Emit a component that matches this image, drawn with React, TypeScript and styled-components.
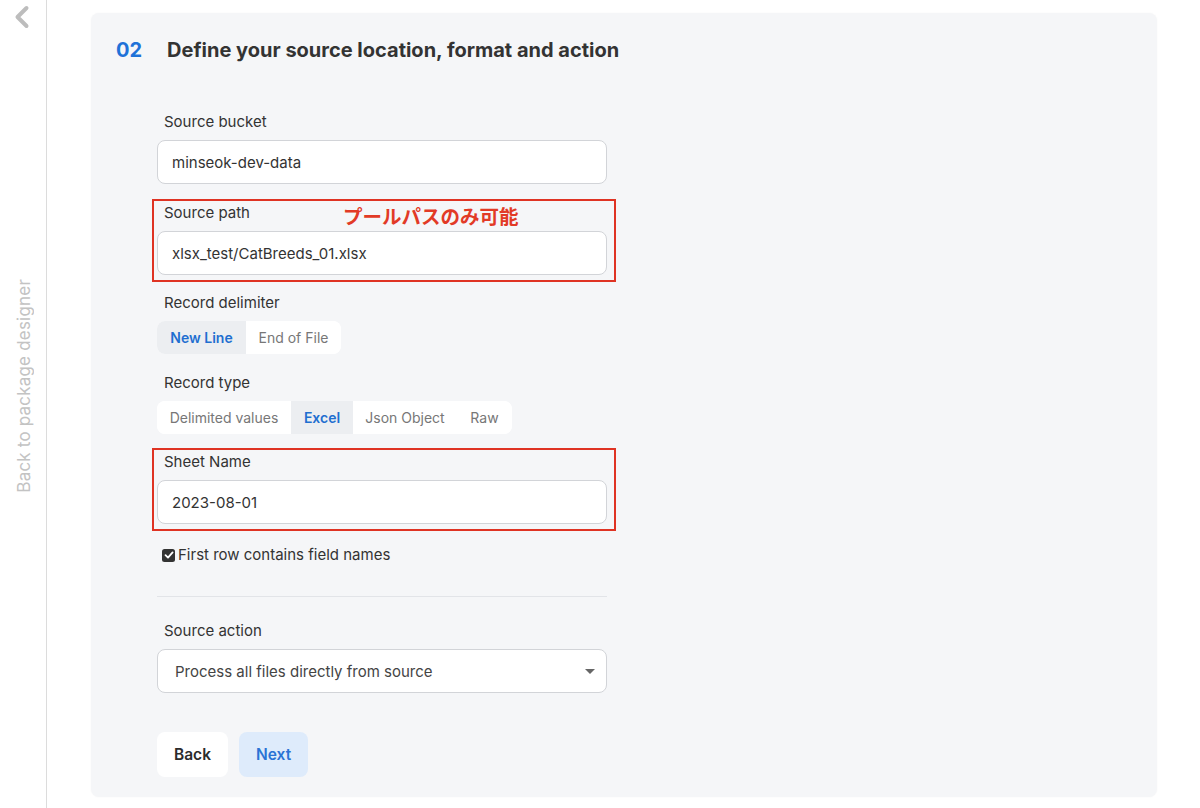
import React from "react";
import styled, { createGlobalStyle } from "styled-components";

const Global = createGlobalStyle`
  html, body { margin: 0; padding: 0; background: #ffffff; }
  body { font-family: Inter, "Noto Sans", "Liberation Sans", sans-serif; color: #333; }
  * { box-sizing: border-box; }
`;

const Page = styled.div`
  display: flex;
  width: 1200px;
  height: 808px;
  overflow: hidden;
`;

const Sidebar = styled.aside`
  width: 47px;
  flex: none;
  border-right: 1px solid #dcdcdc;
  display: flex;
  flex-direction: column;
  align-items: center;
  padding-top: 5px;
`;

const BackChevron = styled.div`
  width: 46px;
  display: flex;
  justify-content: center;
  padding-right: 2px;
`;

const VerticalLink = styled.div`
  margin-top: 250px;
  writing-mode: vertical-rl;
  transform: rotate(180deg);
  font-size: 17px;
  color: #c3c3c3;
  letter-spacing: 0.2px;
  white-space: nowrap;
  padding-right: 1px;
`;

const Main = styled.main`
  flex: 1;
  padding: 13px 43px 11px 44px;
`;

const Panel = styled.section`
  height: 784px;
  background: #f5f6f8;
  border-radius: 8px;
  box-shadow: 0 0 2px rgba(0, 0, 0, 0.04);
  padding: 24px 25px 0 25px;
`;

const Heading = styled.h2`
  margin: 0;
  display: flex;
  align-items: center;
  gap: 25px;
  font-size: 20px;
  line-height: 26px;
  font-weight: 700;
  color: #333;
`;

const StepNo = styled.span`
  color: #1f72d8;
`;

const Form = styled.div`
  width: 450px;
  margin-left: 41px;
  margin-top: 49px;
  display: flex;
  flex-direction: column;
`;

const Field = styled.div<{ $mt?: number; $highlight?: boolean }>`
  position: relative;
  margin-top: ${(p) => p.$mt ?? 0}px;
  display: flex;
  flex-direction: column;
  ${(p) =>
    p.$highlight &&
    `&::after {
      content: "";
      position: absolute;
      left: -5px;
      right: -9px;
      top: -4px;
      bottom: -7px;
      border: 2px solid #df3323;
      pointer-events: none;
    }`}
`;

const Label = styled.div`
  font-size: 15px;
  line-height: 20px;
  color: #333;
  padding-left: 7px;
  margin-bottom: 8px;
`;

const Annotation = styled.div`
  position: absolute;
  left: 186px;
  top: 1px;
  font-family: "Noto Sans CJK JP", sans-serif;
  font-weight: 700;
  font-size: 19.5px;
  line-height: 24px;
  color: #e23a26;
`;

const Input = styled.div`
  height: 44px;
  background: #fff;
  border: 1px solid #d2d4d8;
  border-radius: 8px;
  display: flex;
  align-items: center;
  padding-left: 14px;
  font-size: 15px;
  color: #333;
`;

const Select = styled(Input)`
  padding-left: 17px;
  padding-right: 11px;
  justify-content: space-between;
  color: #444;
`;

const Caret = styled.span`
  width: 0;
  height: 0;
  border-left: 5.5px solid transparent;
  border-right: 5.5px solid transparent;
  border-top: 5px solid #666;
`;

const Segmented = styled.div`
  display: flex;
  align-self: flex-start;
  height: 33px;
  background: #fff;
  border-radius: 8px;
  overflow: hidden;
`;

const Segment = styled.div<{ $active?: boolean; $w: number }>`
  width: ${(p) => p.$w}px;
  display: flex;
  align-items: center;
  justify-content: center;
  font-size: 14px;
  background: ${(p) => (p.$active ? "#eceef1" : "#fff")};
  color: ${(p) => (p.$active ? "#1f6fd0" : "#777")};
  font-weight: ${(p) => (p.$active ? 600 : 400)};
`;

const CheckRow = styled.label`
  margin-top: 21px;
  display: flex;
  align-items: center;
  gap: 3px;
  padding-left: 5px;
  font-size: 15px;
  line-height: 20px;
  color: #333;
`;

const Box = styled.span`
  width: 13px;
  height: 13px;
  border-radius: 2.5px;
  background: #333;
  display: flex;
  align-items: center;
  justify-content: center;
`;

const Divider = styled.hr`
  margin: 31px 0 0 0;
  border: none;
  border-top: 1px solid #e2e4e8;
  width: 450px;
`;

const Buttons = styled.div`
  margin-top: 39px;
  display: flex;
  gap: 11px;
`;

const Button = styled.button<{ $primary?: boolean }>`
  height: 45px;
  padding: 0 17px;
  border: none;
  border-radius: 8px;
  font-family: inherit;
  font-size: 15.5px;
  font-weight: 600;
  background: ${(p) => (p.$primary ? "#deebfb" : "#fff")};
  color: ${(p) => (p.$primary ? "#2a73d5" : "#2b2b2b")};
`;

export default function App() {
  return (
    <Page>
      <Global />
      <Sidebar>
        <BackChevron>
          <svg width="18" height="24" viewBox="0 0 18 24">
            <polyline
              points="13.5,3 4.5,12 13.5,21"
              fill="none"
              stroke="#bdbdbd"
              strokeWidth="4"
              strokeLinecap="round"
              strokeLinejoin="round"
            />
          </svg>
        </BackChevron>
        <VerticalLink>Back to package designer</VerticalLink>
      </Sidebar>
      <Main>
        <Panel>
          <Heading>
            <StepNo>02</StepNo>
            <span>Define your source location, format and action</span>
          </Heading>
          <Form>
            <Field>
              <Label>Source bucket</Label>
              <Input>minseok-dev-data</Input>
            </Field>
            <Field $mt={19} $highlight>
              <Label>Source path</Label>
              <Annotation>プールパスのみ可能</Annotation>
              <Input>xlsx_test/CatBreeds_01.xlsx</Input>
            </Field>
            <Field $mt={18}>
              <Label>Record delimiter</Label>
              <Segmented>
                <Segment $active $w={89}>New Line</Segment>
                <Segment $w={95}>End of File</Segment>
              </Segmented>
            </Field>
            <Field $mt={19}>
              <Label>Record type</Label>
              <Segmented>
                <Segment $w={134}>Delimited values</Segment>
                <Segment $active $w={62}>Excel</Segment>
                <Segment $w={104}>Json Object</Segment>
                <Segment $w={55}>Raw</Segment>
              </Segmented>
            </Field>
            <Field $mt={18} $highlight>
              <Label>Sheet Name</Label>
              <Input>2023-08-01</Input>
            </Field>
            <CheckRow>
              <Box>
                <svg width="10" height="10" viewBox="0 0 10 10">
                  <polyline
                    points="1.5,5.2 4,7.6 8.6,2.4"
                    fill="none"
                    stroke="#fff"
                    strokeWidth="1.8"
                    strokeLinecap="round"
                    strokeLinejoin="round"
                  />
                </svg>
              </Box>
              First row contains field names
            </CheckRow>
            <Divider />
            <Field $mt={24}>
              <Label>Source action</Label>
              <Select>
                Process all files directly from source
                <Caret />
              </Select>
            </Field>
            <Buttons>
              <Button>Back</Button>
              <Button $primary>Next</Button>
            </Buttons>
          </Form>
        </Panel>
      </Main>
    </Page>
  );
}
